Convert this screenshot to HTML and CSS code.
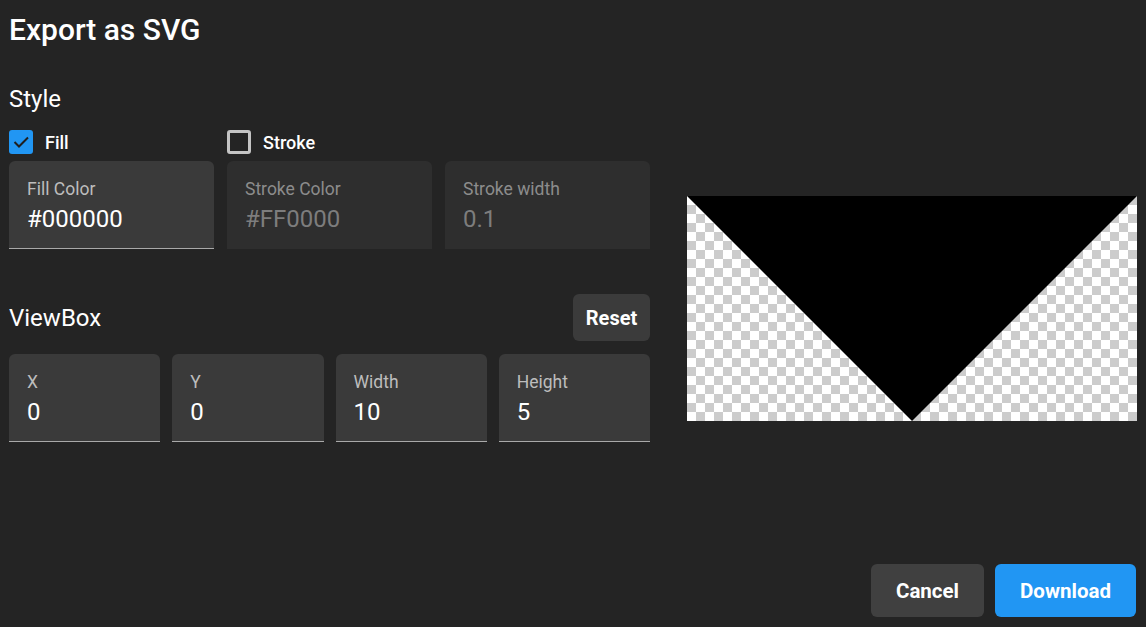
FILE: index.html
```html
<!DOCTYPE html>
<html>
<head>
<meta charset="utf-8">
<link rel="stylesheet" href="styles.css">
</head>
<body>
<div class="dialog">
  <h1 class="title">Export as SVG</h1>
  <div class="content">
    <div class="form">
      <h2 class="heading style-heading">Style</h2>
      <div class="grid3 checks">
        <label class="check">
          <svg class="cb" width="24" height="24" viewBox="0 0 24 24"><rect x="0" y="0" width="24" height="24" rx="3" fill="#2196f3"/><polyline points="5.5,12 10,16.5 19,7.5" fill="none" stroke="#1f1f1f" stroke-width="2"/></svg>
          <span>Fill</span>
        </label>
        <label class="check">
          <span class="cb-empty"></span>
          <span>Stroke</span>
        </label>
      </div>
      <div class="grid3">
        <div class="field active">
          <div class="flabel">Fill Color</div>
          <div class="fvalue">#000000</div>
        </div>
        <div class="field disabled">
          <div class="flabel">Stroke Color</div>
          <div class="fvalue">#FF0000</div>
        </div>
        <div class="field disabled">
          <div class="flabel">Stroke width</div>
          <div class="fvalue">0.1</div>
        </div>
      </div>
      <div class="vb-row">
        <h2 class="heading">ViewBox</h2>
        <button class="btn reset">Reset</button>
      </div>
      <div class="grid4">
        <div class="field active">
          <div class="flabel">X</div>
          <div class="fvalue">0</div>
        </div>
        <div class="field active">
          <div class="flabel">Y</div>
          <div class="fvalue">0</div>
        </div>
        <div class="field active">
          <div class="flabel">Width</div>
          <div class="fvalue">10</div>
        </div>
        <div class="field active">
          <div class="flabel">Height</div>
          <div class="fvalue">5</div>
        </div>
      </div>
    </div>
    <div class="preview">
      <svg width="450" height="225" viewBox="0 0 10 5" preserveAspectRatio="none"><polygon points="0,0 10,0 5,5" fill="#000"/></svg>
    </div>
  </div>
  <div class="actions">
    <button class="btn cancel">Cancel</button>
    <button class="btn download">Download</button>
  </div>
</div>
</body>
</html>
```
FILE: styles.css
```css
* { box-sizing: border-box; }
html, body { margin: 0; padding: 0; }
body {
  background: #242424;
  color: #fff;
  font-family: Roboto, "Noto Sans", sans-serif;
  width: 1146px;
  height: 627px;
  overflow: hidden;
}
.dialog {
  height: 627px;
  display: flex;
  flex-direction: column;
  padding: 12px 10px 10px 9px;
}
.title {
  margin: 0;
  font-size: 30px;
  font-weight: 500;
  line-height: 36px;
}
.content {
  display: flex;
  gap: 37px;
  flex: 1;
  align-items: flex-start;
}
.form {
  width: 641px;
  padding-top: 35px;
}
.heading {
  margin: 0;
  font-size: 24px;
  font-weight: 400;
  line-height: 32px;
}
.grid3 {
  display: grid;
  grid-template-columns: 205px 205px 205px;
  column-gap: 13px;
}
.grid4 {
  display: grid;
  grid-template-columns: repeat(4, 1fr);
  column-gap: 12px;
}
.checks {
  margin-top: 15px;
  margin-bottom: 7px;
}
.check {
  display: flex;
  align-items: center;
  gap: 12px;
  height: 24px;
  font-size: 18px;
  font-weight: 500;
}
.cb { display: block; }
.cb-empty {
  width: 24px;
  height: 24px;
  border: 3px solid #c4c4c4;
  border-radius: 3px;
}
.field {
  height: 88px;
  border-radius: 6px 6px 0 0;
  padding: 17px 18px 0 18px;
}
.field.active {
  background: #3a3a3a;
  border-bottom: 1px solid #a9a9a9;
}
.field.disabled {
  background: #2e2e2e;
}
.flabel {
  font-size: 17.5px;
  line-height: 22px;
  color: #bdbdbd;
}
.fvalue {
  margin-top: 4px;
  font-size: 24px;
  line-height: 30px;
  color: #fff;
}
.disabled .flabel { color: #8c8c8c; }
.disabled .fvalue { color: #7d7d7d; }
.vb-row {
  display: flex;
  justify-content: space-between;
  align-items: center;
  margin-top: 45px;
  margin-bottom: 13px;
}
.btn {
  border: none;
  font-family: Roboto, "Noto Sans", sans-serif;
  font-weight: 700;
  color: #fff;
  border-radius: 6px;
  cursor: pointer;
}
.reset {
  background: #3b3b3b;
  width: 77px;
  height: 47px;
  font-size: 20px;
  padding: 0;
}
.preview {
  margin-top: 148px;
  width: 450px;
  height: 225px;
  background-color: #fff;
  background-image: conic-gradient(#cccccc 25%, #ffffff 0 50%, #cccccc 0 75%, #ffffff 0);
  background-size: 18px 18px;
}
.preview svg { display: block; }
.actions {
  display: flex;
  justify-content: flex-end;
  gap: 11px;
}
.cancel, .download {
  height: 53px;
  font-size: 20.5px;
  padding: 0;
}
.cancel { background: #404040; width: 113px; }
.download { background: #2196f3; width: 141px; }
```
